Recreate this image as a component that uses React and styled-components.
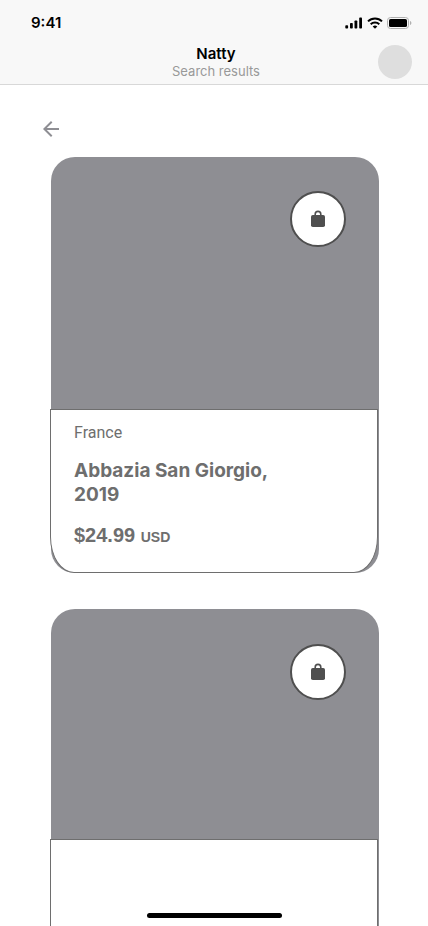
import React from "react";
import styled, { createGlobalStyle } from "styled-components";

const GlobalStyle = createGlobalStyle`
  * { box-sizing: border-box; }
  body {
    margin: 0;
    background: #fff;
    font-family: Inter, "Liberation Sans", sans-serif;
  }
`;

const Screen = styled.div`
  position: relative;
  display: flex;
  flex-direction: column;
  height: 100vh;
  overflow: hidden;
  background: #fff;
`;

const Header = styled.header`
  flex: none;
  background: #f8f8f8;
  border-bottom: 1px solid #d8d8d8;
`;

const StatusBar = styled.div`
  display: flex;
  align-items: center;
  justify-content: space-between;
  height: 44px;
  padding: 1px 16px 0 31px;
`;

const Clock = styled.time`
  font-size: 15px;
  line-height: 20px;
  font-weight: 600;
  color: #000;
`;

const StatusIcons = styled.div`
  display: flex;
  align-items: center;
  gap: 4px;
  svg { display: block; }
`;

const NavBar = styled.div`
  display: grid;
  grid-template-columns: 34px 1fr 34px;
  align-items: center;
  height: 40px;
  padding: 0 16px 4px 20px;
`;

const Titles = styled.div`
  grid-column: 2;
  text-align: center;
`;

const Title = styled.h1`
  margin: 0;
  font-size: 15px;
  line-height: 18px;
  font-weight: 600;
  color: #000;
`;

const Subtitle = styled.p`
  margin: 0;
  font-size: 13px;
  line-height: 16px;
  color: #999;
`;

const Avatar = styled.button`
  width: 34px;
  height: 34px;
  padding: 0;
  border: 0;
  border-radius: 50%;
  background: #dedede;
`;

const Results = styled.main`
  flex: 1;
  min-height: 0;
  overflow-y: auto;
  scrollbar-width: none;
  padding: 32px 49px 32px 51px;
`;

const BackLink = styled.a`
  display: block;
  width: 24px;
  height: 24px;
  margin: 0 0 16px -12px;
  color: #8e8e93;
  svg { display: block; }
`;

const CardList = styled.div`
  display: flex;
  flex-direction: column;
  gap: 36px;
`;

const Card = styled.article`
  border-radius: 24px;
  background: #8e8e93;
`;

const Photo = styled.div`
  display: flex;
  justify-content: flex-end;
  align-items: flex-start;
  height: ${(p) => p.$height}px;
  padding: ${(p) => p.$inset}px 33px 0;
`;

const BagButton = styled.button`
  display: flex;
  align-items: center;
  justify-content: center;
  width: 56px;
  height: 56px;
  padding: 0;
  border: 2px solid #4f4f4f;
  border-radius: 50%;
  background: #fff;
  color: #4f4f4f;
  svg { display: block; }
`;

const Details = styled.div`
  min-height: 164px;
  margin: 0 1px 0 -1px;
  padding: 13px 23px 22px;
  border: 1px solid #6e6e6e;
  border-radius: 0 0 24px 24px / 0 0 36px 36px;
  background: #fff;
  color: #6e6e6e;
`;

const Origin = styled.p`
  margin: 0 0 16px;
  font-family: Roboto, sans-serif;
  font-size: 16px;
  line-height: 20px;
`;

const Name = styled.h2`
  max-width: 220px;
  margin: 0 0 16px;
  font-size: 19px;
  line-height: 24px;
  font-weight: 700;
`;

const Price = styled.p`
  margin: 0;
  font-family: "Liberation Sans", sans-serif;
  font-size: 20px;
  line-height: 24px;
  font-weight: 700;
`;

const Currency = styled.span`
  font-size: 14px;
`;

const HomeIndicator = styled.div`
  position: absolute;
  left: 50%;
  bottom: 8px;
  width: 135px;
  height: 5px;
  margin-left: -67px;
  border-radius: 3px;
  background: #000;
`;

const SignalIcon = () => (
  <svg width="18" height="12" viewBox="0 0 18 12" aria-hidden="true">
    <rect x="0.3" y="8.2" width="2.8" height="3.3" rx="0.8" />
    <rect x="5" y="6" width="2.8" height="5.500" rx="0.8" />
    <rect x="9.5" y="3.500" width="2.8" height="8" rx="0.8" />
    <rect x="14.2" y="0.6" width="2.8" height="10.9" rx="0.8" />
  </svg>
);

const WifiIcon = () => (
  <svg width="16" height="12" viewBox="0 0 16 12" fill="none" stroke="#000" strokeWidth="2" aria-hidden="true">
    <path d="M1 4.4a10 10 0 0 1 14 0" />
    <path d="M3.7 7.2a6.2 6.2 0 0 1 8.6 0" />
    <path d="M8 11.8 5.7 9.5a3.4 3.4 0 0 1 4.6 0z" fill="#000" stroke="none" />
  </svg>
);

const BatteryIcon = () => (
  <svg width="25" height="12" viewBox="0 0 25 12" aria-hidden="true">
    <rect x="0.5" y="0.5" width="21" height="11" rx="3" fill="none" stroke="#b0b0b0" />
    <path d="M23 4v4c.8-.3 1.4-1.1 1.4-2S23.8 4.3 23 4z" fill="#b0b0b0" />
    <rect x="2" y="2" width="18" height="8" rx="1.6" />
  </svg>
);

const BackIcon = () => (
  <svg width="24" height="24" viewBox="0 0 24 24" fill="currentColor" aria-hidden="true">
    <path d="M20 11H7.83l5.59-5.59L12 4l-8 8 8 8 1.41-1.41L7.83 13H20v-2z" />
  </svg>
);

const BagIcon = () => (
  <svg width="16" height="18" viewBox="0 0 16 18" fill="currentColor" aria-hidden="true">
    <rect x="1" y="5" width="14" height="12" rx="1.8" />
    <path d="M5.2 6V4.2a2.8 2.8 0 0 1 5.6 0V6" fill="none" stroke="currentColor" strokeWidth="1.6" />
  </svg>
);

const wines = [
  {
    id: 1,
    photoHeight: 252,
    inset: 34,
    origin: "France",
    name: "Abbazia San Giorgio, 2019",
    price: "$24.99",
    currency: "USD",
  },
  { id: 2, photoHeight: 230, inset: 35 },
];

const WineCard = ({ wine }) => (
  <Card>
    <Photo $height={wine.photoHeight} $inset={wine.inset}>
      <BagButton type="button" aria-label="Add to bag">
        <BagIcon />
      </BagButton>
    </Photo>
    <Details>
      {wine.name && (
        <>
          <Origin>{wine.origin}</Origin>
          <Name>{wine.name}</Name>
          <Price>
            {wine.price} <Currency>{wine.currency}</Currency>
          </Price>
        </>
      )}
    </Details>
  </Card>
);

export default function App() {
  return (
    <Screen>
      <GlobalStyle />
      <Header>
        <StatusBar>
          <Clock>9:41</Clock>
          <StatusIcons>
            <SignalIcon />
            <WifiIcon />
            <BatteryIcon />
          </StatusIcons>
        </StatusBar>
        <NavBar>
          <Titles>
            <Title>Natty</Title>
            <Subtitle>Search results</Subtitle>
          </Titles>
          <Avatar type="button" aria-label="Profile" />
        </NavBar>
      </Header>
      <Results>
        <BackLink href="#" aria-label="Back">
          <BackIcon />
        </BackLink>
        <CardList>
          {wines.map((wine) => (
            <WineCard key={wine.id} wine={wine} />
          ))}
        </CardList>
      </Results>
      <HomeIndicator />
    </Screen>
  );
}
